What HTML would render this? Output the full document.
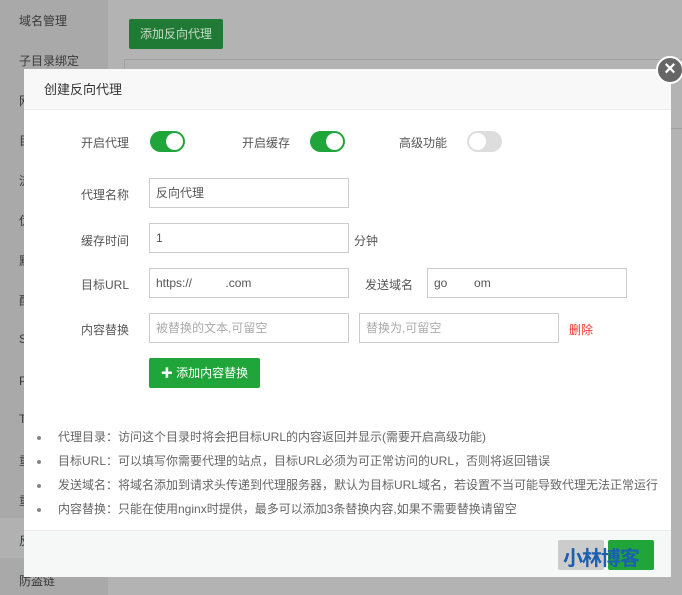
<!DOCTYPE html>
<html><head><meta charset="utf-8"><style>
*{margin:0;padding:0;box-sizing:border-box}
body{width:682px;height:595px;overflow:hidden;position:relative;background:#b3b3b3;font-family:"Liberation Sans","Noto Sans CJK SC",sans-serif;font-size:12px;color:#333}
.side{position:absolute;left:0;top:0;width:108px;height:595px;background:#a9a9a9}
.side div{position:absolute;left:19px;font-size:12px;color:#3a3a3a}
.hl{position:absolute;left:0;top:518px;width:108px;height:40px;background:#b1b1b1}
.topbtn{position:absolute;left:129px;top:19px;width:94px;height:30px;background:#1f7a36;color:#c8dcc8;font-size:12px;line-height:30px;text-align:center;border-radius:2px}
.tbl{position:absolute;left:124px;top:59px;width:560px;height:70px;border:1px solid #a0a0a0}
.modal{position:absolute;left:24px;top:69px;width:647px;height:508px;background:#fff}
.hd{height:41px;background:#f8f8f8;border-bottom:1px solid #eee;padding-left:20px;line-height:41px;font-size:13px;color:#333}
.ft{position:absolute;left:0;bottom:0;width:647px;height:47px;background:#f6f7f7;border-top:1px solid #eee}
.lbl{position:absolute;font-size:12px;color:#555;text-align:right;width:80px}
.inp{position:absolute;height:30px;border:1px solid #ccc;font-size:12px;line-height:28px;padding-left:6px;color:#555}
.ph{color:#aaa}
.tg{position:absolute;width:35px;height:21px;border-radius:11px;background:#20a53a}
.tg:after{content:"";position:absolute;top:2px;right:2px;width:17px;height:17px;border-radius:50%;background:#fff}
.tg.off{background:#ddd}.tg.off:after{right:auto;left:2px}
ul{position:absolute;left:34px;top:361px;list-style:none}
li{font-size:12px;color:#666;height:24px;line-height:15px;position:relative}
li:before{content:"";position:absolute;left:-21px;top:6px;width:4px;height:4px;border-radius:50%;background:#888}
.close{position:absolute;left:656px;top:56px;width:28px;height:28px;border-radius:50%;background:#666;border:2px solid #fff;color:#fff;text-align:center;line-height:22px;font-size:20px;font-weight:bold}
</style></head><body>
<div class="side">
<div class="hl" style="left:0"></div>
<div style="top:12px">域名管理</div><div style="top:52px">子目录绑定</div><div style="top:92px">网站目录</div><div style="top:132px">目录</div><div style="top:172px">流量限制</div><div style="top:212px">伪静态</div><div style="top:252px">默认文档</div><div style="top:292px">配置文件</div><div style="top:332px">SSL</div><div style="top:372px">PHP版本</div><div style="top:412px">Tomcat</div><div style="top:452px">重定向</div><div style="top:492px">重定向</div><div style="top:532px">反向代理</div><div style="top:572px">防盗链</div>
</div>
<div class="topbtn">添加反向代理</div>
<div class="tbl"></div>
<div class="modal">
<div class="hd">创建反向代理</div>
<div class="lbl" style="left:25px;top:65px">开启代理</div><div class="tg" style="left:126px;top:62px"></div>
<div class="lbl" style="left:186px;top:65px">开启缓存</div><div class="tg" style="left:286px;top:62px"></div>
<div class="lbl" style="left:343px;top:65px">高级功能</div><div class="tg off" style="left:443px;top:62px"></div>
<div class="lbl" style="left:25px;top:117px">代理名称</div><div class="inp" style="left:125px;top:109px;width:200px">反向代理</div>
<div class="lbl" style="left:25px;top:163px">缓存时间</div><div class="inp" style="left:125px;top:154px;width:200px">1</div><div style="position:absolute;left:330px;top:163px;color:#555">分钟</div>
<div class="lbl" style="left:25px;top:207px">目标URL</div><div class="inp" style="left:125px;top:199px;width:200px">https://&nbsp;&nbsp;&nbsp;&nbsp;&nbsp;&nbsp;&nbsp;&nbsp;&nbsp;&nbsp;.com</div>
<div class="lbl" style="left:309px;top:207px">发送域名</div><div class="inp" style="left:403px;top:199px;width:200px">go&nbsp;&nbsp;&nbsp;&nbsp;&nbsp;&nbsp;&nbsp;&nbsp;om</div>
<div class="lbl" style="left:25px;top:252px">内容替换</div><div class="inp ph" style="left:125px;top:244px;width:200px">被替换的文本,可留空</div><div class="inp ph" style="left:335px;top:244px;width:200px">替换为,可留空</div><div style="position:absolute;left:545px;top:252px;color:#e33">删除</div>
<div style="position:absolute;left:125px;top:289px;width:111px;height:30px;background:#20a53a;color:#fff;line-height:30px;text-align:center;border-radius:2px">✚ 添加内容替换</div>
<ul>
<li>代理目录：访问这个目录时将会把目标URL的内容返回并显示(需要开启高级功能)</li>
<li>目标URL：可以填写你需要代理的站点，目标URL必须为可正常访问的URL，否则将返回错误</li>
<li>发送域名：将域名添加到请求头传递到代理服务器，默认为目标URL域名，若设置不当可能导致代理无法正常运行</li>
<li>内容替换：只能在使用nginx时提供，最多可以添加3条替换内容,如果不需要替换请留空</li>
</ul>
<div class="ft">
<div style="position:absolute;left:404px;top:8px;width:0;height:0"></div>
<div style="position:absolute;left:534px;top:9px;width:46px;height:30px;background:#ccc;border-radius:2px"></div>
<div style="position:absolute;left:584px;top:9px;width:46px;height:30px;background:#20a53a;border-radius:2px"></div>
<div style="position:absolute;left:539px;top:11px;font-size:20px;font-weight:bold;color:#1b5fae;letter-spacing:-1px">小林博客</div>
</div>
</div>
<div class="close">×</div>
</body></html>
